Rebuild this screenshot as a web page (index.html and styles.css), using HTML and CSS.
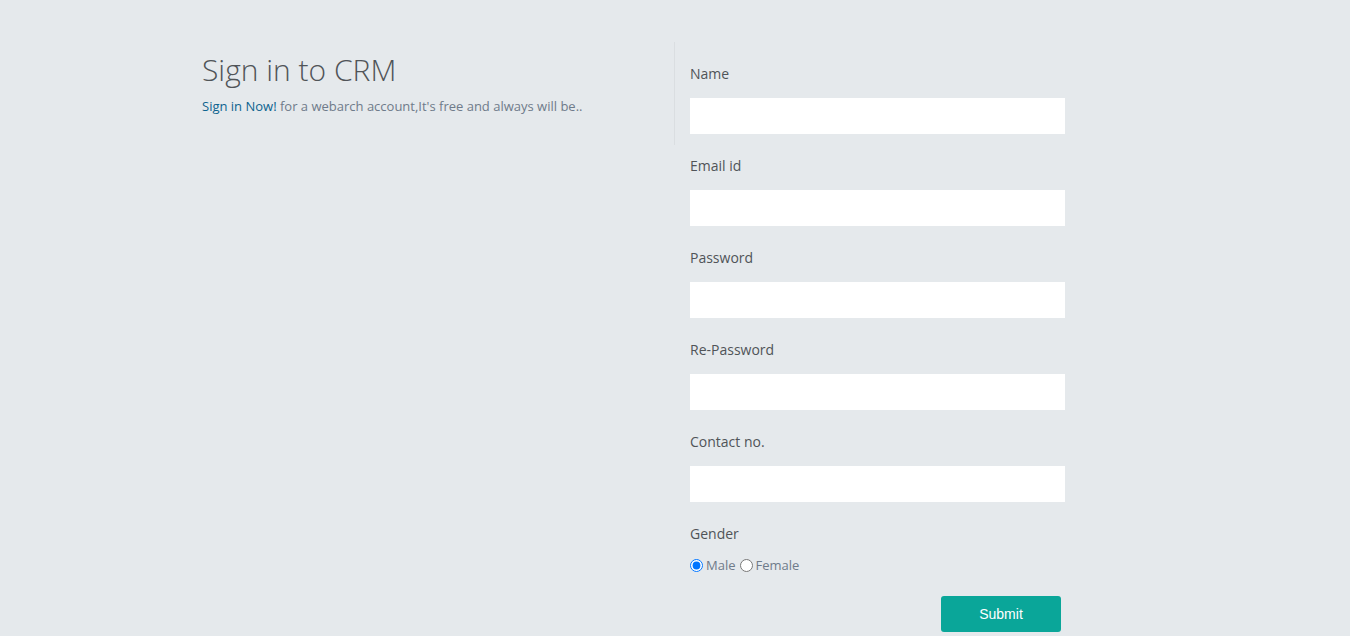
FILE: index.html
```html
<!DOCTYPE html>
<html>
<head>
<meta charset="utf-8">
<link rel="stylesheet" href="styles.css">
</head>
<body>
<div class="page">
  <div class="intro">
    <h2 class="title">Sign in to CRM</h2>
    <p class="sub"><a class="link" href="#">Sign in Now!</a> for a webarch account,It's free and always will be..</p>
  </div>
  <form class="form">
    <div class="field"><label class="label">Name</label><input class="input" type="text"></div>
    <div class="field"><label class="label">Email id</label><input class="input" type="text"></div>
    <div class="field"><label class="label">Password</label><input class="input" type="password"></div>
    <div class="field"><label class="label">Re-Password</label><input class="input" type="password"></div>
    <div class="field"><label class="label">Contact no.</label><input class="input" type="text"></div>
    <div class="field gender">
      <label class="label">Gender</label>
      <div class="radios">
        <input class="radio" type="radio" name="g" checked><span class="rlabel">Male</span>
        <input class="radio" type="radio" name="g"><span class="rlabel">Female</span>
      </div>
    </div>
    <div class="actions"><button class="btn" type="button">Submit</button></div>
  </form>
</div>
</body>
</html>
```

FILE: styles.css
```css
html, body {
  margin: 0;
  padding: 0;
}
body {
  background: #e5e9ec;
  font-family: "Open Sans", "Liberation Sans", sans-serif;
  color: #505458;
  height: 636px;
  overflow: hidden;
}
.page {
  display: flex;
  align-items: flex-start;
  padding: 42px 0 0 202px;
}
.intro {
  width: 473px;
  height: 103px;
  border-right: 1px solid #dadee1;
  box-sizing: border-box;
}
.title {
  margin: 10px 0 0 0;
  font-size: 30px;
  font-weight: 300;
  line-height: 36px;
  color: #505458;
}
.sub {
  margin: 8px 0 0 0;
  font-size: 13px;
  line-height: 20px;
  color: #6f7b8a;
}
.link {
  color: #0d638f;
  text-decoration: none;
}
.form {
  width: 375px;
  padding: 22px 0 0 15px;
  display: flex;
  flex-direction: column;
}
.field {
  display: flex;
  flex-direction: column;
  margin-bottom: 22px;
}
.label {
  font-size: 14px;
  line-height: 20px;
  color: #505458;
  margin-bottom: 14px;
}
.input {
  height: 36px;
  border: none;
  background: #fff;
  padding: 0;
  margin: 0;
  box-sizing: border-box;
  width: 375px;
}
.gender .label {
  margin-bottom: 12px;
}
.radios {
  display: flex;
  align-items: center;
  font-size: 13px;
  color: #6f7b8a;
}
.radio {
  margin: 0 3px 0 0;
  width: 13px;
  height: 13px;
}
.rlabel {
  margin-right: 4px;
  line-height: 18px;
}
.actions {
  display: flex;
  justify-content: flex-end;
  padding-right: 4px;
  margin-top: 0;
}
.btn {
  width: 120px;
  height: 36px;
  background: #0aa699;
  border: none;
  border-radius: 3px;
  color: #fff;
  font-family: "Liberation Sans", Arial, sans-serif;
  font-size: 14px;
}
```
